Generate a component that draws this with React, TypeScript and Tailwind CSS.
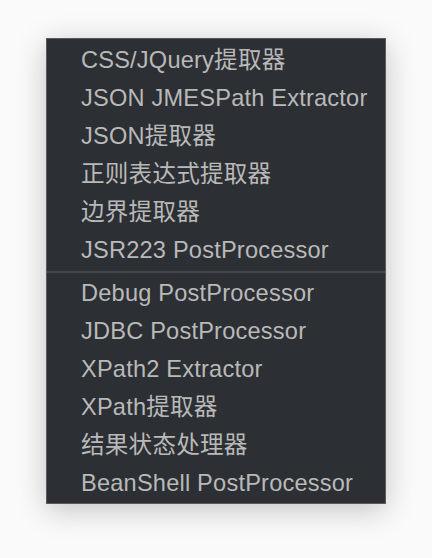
const groupA = [
  "CSS/JQuery提取器",
  "JSON JMESPath Extractor",
  "JSON提取器",
  "正则表达式提取器",
  "边界提取器",
  "JSR223 PostProcessor",
];

const groupB = [
  "Debug PostProcessor",
  "JDBC PostProcessor",
  "XPath2 Extractor",
  "XPath提取器",
  "结果状态处理器",
  "BeanShell PostProcessor",
];

function MenuItem({ label }: { label: string }) {
  return (
    <div className="h-[38px] flex items-center pl-[34px] text-[23.6px] tracking-[0.2px] text-[#b9b9b9] leading-none whitespace-nowrap">
      {label}
    </div>
  );
}

export default function App() {
  return (
    <div
      className="w-[432px] h-[558px] bg-[#fafafa] pt-[38px] pl-[46px]"
      style={{ fontFamily: '"Liberation Sans", Arial, "Noto Sans CJK SC", sans-serif' }}
    >
      <div className="w-[340px] h-[466px] bg-[#2c2f33] border border-[#5a5a5a] shadow-[0_6px_28px_rgba(0,0,0,0.22)] flex flex-col">
        <div className="pt-[3px] pb-[1px]">
          {groupA.map((l) => (
            <MenuItem key={l} label={l} />
          ))}
        </div>
        <div className="h-[2px] bg-[#44474b]" />
        <div className="pt-[2px]">
          {groupB.map((l) => (
            <MenuItem key={l} label={l} />
          ))}
        </div>
      </div>
    </div>
  );
}
